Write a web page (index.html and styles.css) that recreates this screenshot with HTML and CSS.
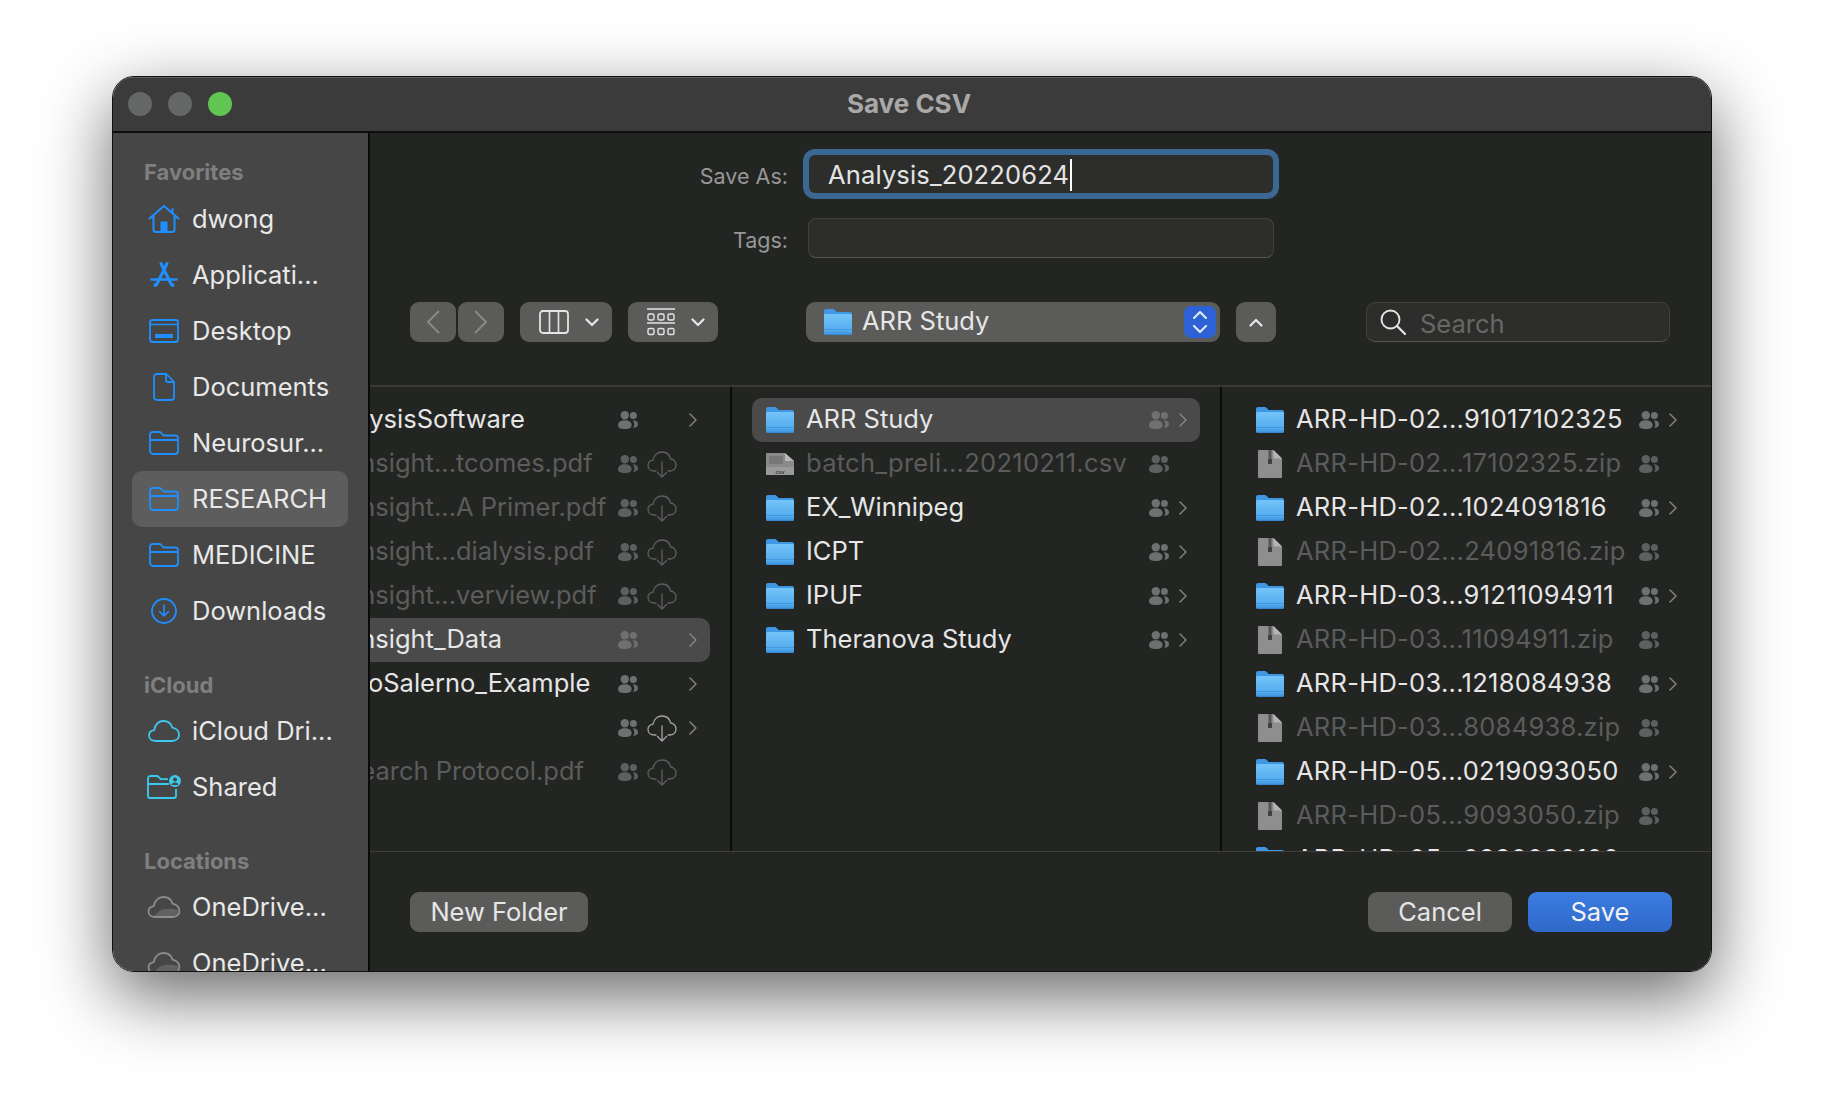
FILE: index.html
```html
<!DOCTYPE html>
<html>
<head>
  <title>Save CSV</title>
  <link rel="stylesheet" href="styles.css">
</head>
<body>
  <svg class="sprite" width="0" height="0">
    <defs>
      <linearGradient id="folder_grad" x1="0" y1="0" x2="0" y2="1">
        <stop offset="0" stop-color="#74c4f8"/>
        <stop offset="1" stop-color="#4ba6ec"/>
      </linearGradient>
      <symbol id="i_folder" viewBox="0 0 28 26">
        <path d="M0 2a2 2 0 0 1 2-2h6.500c1 0 1.600.4 2.300 1.100L12.600 3H26a2 2 0 0 1 2 2v4H0z" fill="#3f97e3"/>
        <path d="M0 6.500c0-.8.7-1.500 1.500-1.500H26.500c.8 0 1.500.7 1.500 1.500V24a2 2 0 0 1-2 2H2a2 2 0 0 1-2-2z" fill="url(#folder_grad)"/>
        <path d="M0 20.500h28M0 23h28" stroke="#3b8fd8" stroke-width="1" opacity=".7"/>
        <path d="M0 24.500h28V24a2 2 0 0 1-2 2H2a2 2 0 0 1-2-2z" fill="#358ad6"/>
      </symbol>
      <symbol id="i_zip" viewBox="0 0 24 28">
        <path d="M1 0h14.500L24 8.500V27a1 1 0 0 1-1 1H1a1 1 0 0 1-1-1V1a1 1 0 0 1 1-1z" fill="#8e8e8e"/>
        <path d="M15.500 0L24 8.500h-7a1.500 1.500 0 0 1-1.500-1.500z" fill="#b5b5b5"/>
        <rect x="10.500" y="0" width="3" height="10" fill="#555"/>
        <rect x="10" y="9" width="4" height="5" rx="1" fill="#3e3e3e"/>
      </symbol>
      <symbol id="i_csv" viewBox="0 0 28 22">
        <path d="M1 0h18l9 8v13a1 1 0 0 1-1 1H1a1 1 0 0 1-1-1V1a1 1 0 0 1 1-1z" fill="#8a8a8a"/>
        <path d="M19 0l9 8h-8a1 1 0 0 1-1-1z" fill="#b8b8b8"/>
        <path d="M3 3h14v8H3z" fill="#777"/>
        <path d="M0 14h28v7a1 1 0 0 1-1 1H1a1 1 0 0 1-1-1z" fill="#9a9a9a"/>
        <text x="14" y="20.500" font-size="5.500" font-family="'Liberation Sans', sans-serif" font-weight="700" text-anchor="middle" fill="#3a3a3a">csv</text>
      </symbol>
      <symbol id="i_users" viewBox="0 0 20 18">
        <circle cx="6.800" cy="4.200" r="4.200" fill="currentColor"/>
        <circle cx="15.400" cy="4.500" r="3.500" fill="currentColor"/>
        <path d="M0 14c0-3 2.800-4.700 6.800-4.700s6.800 1.700 6.800 4.700c0 2.800-2 4-6.800 4S0 16.800 0 14z" fill="currentColor"/>
        <path d="M14.800 9.300c3 0 5.200 1.500 5.200 4 0 2.200-1.500 3.500-5 3.600 .9-.9 1.300-1.900 1.300-3.200 0-1.700-.6-3.300-1.500-4.400z" fill="currentColor"/>
      </symbol>
      <symbol id="i_cloud_dl" viewBox="0 0 30 27">
        <path d="M9 20H7.500C3.500 20 1 17.600 1 14.500c0-2.900 2-5 5-5.400C6.900 4.200 10.500 1 15 1c4.600 0 7.700 2.900 8.700 7 3.200.4 5.300 3 5.300 6 0 3.300-2.400 6-6.500 6H21" fill="none" stroke="currentColor" stroke-width="1.300" stroke-linecap="round"/>
        <path d="M15 11v15M10.500 21.500L15 26l4.500-4.500" fill="none" stroke="currentColor" stroke-width="1.300" stroke-linecap="round" stroke-linejoin="round"/>
      </symbol>
      <symbol id="i_chev" viewBox="0 0 8 14">
        <path d="M1 1l6 6-6 6" fill="none" stroke="currentColor" stroke-width="1.400" stroke-linecap="round" stroke-linejoin="round"/>
      </symbol>
      <symbol id="i_side_folder" viewBox="0 0 30 24">
        <path d="M1 5V4a3 3 0 0 1 3-3h6c1 0 1.700.4 2.300 1l2.200 2.500H26a3 3 0 0 1 3 3V20a3 3 0 0 1-3 3H4a3 3 0 0 1-3-3zM1 9h28" fill="none" stroke="currentColor" stroke-width="1.800" stroke-linejoin="round"/>
      </symbol>
      <symbol id="i_onedrive" viewBox="0 0 33 22">
        <path d="M7 20c4-6 10-9 24-6 .6 3-2 6-6 6z" fill="#616161"/>
        <path d="M8 21C3.800 21 1 18.800 1 15.500c0-3 2.200-5 5.200-5.400C7.400 4.600 11.200 1 16 1c4.400 0 7.800 2.600 9 6.600 3.900.6 7 3.600 7 7.100 0 3.500-2.700 6.300-7 6.300z" fill="none" stroke="#8e8e8e" stroke-width="1.800"/>
      </symbol>
    </defs>
  </svg>

  <div class="window">
    <div class="titlebar">
      <div class="lights">
        <span class="light"></span>
        <span class="light"></span>
        <span class="light light_green"></span>
      </div>
      <div class="title">Save CSV</div>
    </div>

    <div class="content">
      <div class="sidebar">
        <div class="side_heading side_heading_first">Favorites</div>
        <div class="side_item">
          <svg class="side_icon" width="32" height="28" viewBox="0 0 32 28"><path d="M1.500 13.500L16 1l14.500 12.500M24.500 4v4" fill="none" stroke="#1f8fff" stroke-width="2" stroke-linecap="round" stroke-linejoin="round"/><path d="M5.500 11v13.500a2.500 2.500 0 0 0 2.500 2.500h16a2.500 2.500 0 0 0 2.500-2.500V11" fill="none" stroke="#1f8fff" stroke-width="2"/><rect x="12.500" y="16.500" width="7" height="10" fill="#1f8fff"/></svg>
          <span>dwong</span>
        </div>
        <div class="side_item">
          <svg class="side_icon" width="28" height="26" viewBox="0 0 28 26"><path d="M11 1.500l10 20.500M17 1.500L7 22" fill="none" stroke="#1f8fff" stroke-width="3" stroke-linecap="round"/><path d="M1.500 17.500h25" stroke="#1f8fff" stroke-width="2.600" stroke-linecap="round"/><circle cx="5.500" cy="23" r="2" fill="#1f8fff"/><circle cx="22.500" cy="23" r="2" fill="#1f8fff"/></svg>
          <span>Applicati...</span>
        </div>
        <div class="side_item">
          <svg class="side_icon" width="30" height="24" viewBox="0 0 30 24"><rect x="1" y="1" width="28" height="22" rx="2.500" fill="none" stroke="#1f8fff" stroke-width="1.800"/><path d="M1 5.500h28" stroke="#1f8fff" stroke-width="1.500"/><rect x="6" y="15" width="18" height="4" rx="1" fill="#1f8fff"/></svg>
          <span>Desktop</span>
        </div>
        <div class="side_item">
          <svg class="side_icon" width="22" height="28" viewBox="0 0 22 28"><path d="M4 1h9.500L21 9v15a3 3 0 0 1-3 3H4a3 3 0 0 1-3-3V4a3 3 0 0 1 3-3zM13 1v6a2 2 0 0 0 2 2h6" fill="none" stroke="#1f8fff" stroke-width="1.800" stroke-linejoin="round"/></svg>
          <span>Documents</span>
        </div>
        <div class="side_item">
          <svg class="side_icon side_blue" width="30" height="24"><use href="#i_side_folder"/></svg>
          <span>Neurosur...</span>
        </div>
        <div class="side_item side_item_active">
          <svg class="side_icon side_blue" width="30" height="24"><use href="#i_side_folder"/></svg>
          <span>RESEARCH</span>
        </div>
        <div class="side_item">
          <svg class="side_icon side_blue" width="30" height="24"><use href="#i_side_folder"/></svg>
          <span>MEDICINE</span>
        </div>
        <div class="side_item">
          <svg class="side_icon" width="26" height="26" viewBox="0 0 26 26"><circle cx="13" cy="13" r="12" fill="none" stroke="#1f8fff" stroke-width="1.800"/><path d="M13 7v11M8.500 13.500L13 18l4.500-4.500" fill="none" stroke="#1f8fff" stroke-width="1.600" stroke-linecap="round" stroke-linejoin="round"/></svg>
          <span>Downloads</span>
        </div>

        <div class="side_heading">iCloud</div>
        <div class="side_item">
          <svg class="side_icon" width="32" height="22" viewBox="0 0 32 22"><path d="M8 21C3.800 21 1 18.800 1 15.500c0-3 2.200-5 5.200-5.400C7.400 4.600 11 1 15.500 1c4.300 0 7.600 2.600 8.800 6.600C28 8.200 31 11 31 14.700c0 3.500-2.700 6.300-7 6.300z" fill="none" stroke="#3dc8ee" stroke-width="1.800"/></svg>
          <span>iCloud Dri...</span>
        </div>
        <div class="side_item">
          <svg class="side_icon" width="34" height="24" viewBox="0 0 34 24"><path d="M1 9V3.500A2.500 2.500 0 0 1 3.500 1h6c1 0 1.600.4 2.200 1l2 2.200H21M1 9h21M1 9v12a2 2 0 0 0 2 2h24a2 2 0 0 0 2-2v-7" fill="none" stroke="#3dc8ee" stroke-width="1.800" stroke-linejoin="round"/><circle cx="28" cy="6" r="6" fill="#3dc8ee"/><circle cx="28" cy="4.500" r="2" fill="#464646"/><path d="M24.500 10c.5-2 2-2.600 3.500-2.600s3 .6 3.500 2.600z" fill="#464646"/></svg>
          <span>Shared</span>
        </div>

        <div class="side_heading">Locations</div>
        <div class="side_item">
          <svg class="side_icon" width="33" height="22"><use href="#i_onedrive"/></svg>
          <span>OneDrive...</span>
        </div>
        <div class="side_item">
          <svg class="side_icon" width="33" height="22"><use href="#i_onedrive"/></svg>
          <span>OneDrive...</span>
        </div>
      </div>

      <div class="main">
        <div class="form">
          <div class="form_row">
            <label class="form_label">Save As:</label>
            <div class="field field_focus">Analysis_20220624<span class="caret"></span></div>
          </div>
          <div class="form_row form_row_tags">
            <label class="form_label">Tags:</label>
            <div class="field"></div>
          </div>
        </div>

        <div class="toolbar">
          <div class="tool tool_nav">
            <svg width="14" height="24" viewBox="0 0 14 24"><path d="M12.500 1.500L2 12l10.500 10.500" fill="none" stroke="#8a8b89" stroke-width="1.800" stroke-linecap="round" stroke-linejoin="round"/></svg>
          </div>
          <div class="tool tool_nav tool_next">
            <svg width="14" height="24" viewBox="0 0 14 24"><path d="M1.500 1.500L12 12 1.500 22.500" fill="none" stroke="#8a8b89" stroke-width="1.800" stroke-linecap="round" stroke-linejoin="round"/></svg>
          </div>
          <div class="tool tool_view">
            <svg width="30" height="24" viewBox="0 0 30 24"><rect x="1" y="1" width="28" height="22" rx="3" fill="none" stroke="#e4e4e4" stroke-width="1.800"/><path d="M10.500 1v22M19.500 1v22" stroke="#e4e4e4" stroke-width="1.600"/></svg>
            <svg class="tool_chev" width="14" height="9" viewBox="0 0 14 9"><path d="M1.500 1.500L7 7l5.500-5.500" fill="none" stroke="#e8e8e8" stroke-width="2.200" stroke-linecap="round" stroke-linejoin="round"/></svg>
          </div>
          <div class="tool tool_group">
            <svg width="28" height="28" viewBox="0 0 28 28"><path d="M0 1h28M0 15h28" stroke="#e4e4e4" stroke-width="1.400"/><g fill="none" stroke="#e4e4e4" stroke-width="1.400"><rect x="1" y="6" width="6" height="6" rx="1.500"/><rect x="11" y="6" width="6" height="6" rx="1.500"/><rect x="21" y="6" width="6" height="6" rx="1.500"/><rect x="1" y="20.500" width="6" height="6" rx="1.500"/><rect x="11" y="20.500" width="6" height="6" rx="1.500"/><rect x="21" y="20.500" width="6" height="6" rx="1.500"/></g></svg>
            <svg class="tool_chev" width="14" height="9" viewBox="0 0 14 9"><path d="M1.500 1.500L7 7l5.500-5.500" fill="none" stroke="#e8e8e8" stroke-width="2.200" stroke-linecap="round" stroke-linejoin="round"/></svg>
          </div>
          <div class="tool tool_popup">
            <svg width="28" height="26"><use href="#i_folder"/></svg>
            <span class="popup_name">ARR Study</span>
            <span class="stepper">
              <svg width="16" height="26" viewBox="0 0 16 26"><path d="M2 9l6-6 6 6M2 17l6 6 6-6" fill="none" stroke="#dfe6f7" stroke-width="2.200" stroke-linecap="round" stroke-linejoin="round"/></svg>
            </span>
          </div>
          <div class="tool tool_up">
            <svg width="14" height="9" viewBox="0 0 14 9"><path d="M1.500 7.500L7 2l5.500 5.500" fill="none" stroke="#e8e8e8" stroke-width="2.200" stroke-linecap="round" stroke-linejoin="round"/></svg>
          </div>
          <div class="search">
            <svg width="26" height="26" viewBox="0 0 26 26"><circle cx="10.500" cy="10.500" r="9" fill="none" stroke="#e4e4e4" stroke-width="1.900"/><path d="M17 17l8 8" stroke="#e4e4e4" stroke-width="2.300" stroke-linecap="round"/></svg>
            <span class="search_text">Search</span>
          </div>
        </div>

        <div class="columns">
          <div class="col col_scrolled">
            <div class="list">
              <div class="row"><svg class="icon" width="28" height="26"><use href="#i_folder"/></svg><span class="name">AnalysisSoftware</span><svg class="users" width="20" height="18"><use href="#i_users"/></svg><span class="cloud_slot"></span><svg class="chev" width="8" height="14"><use href="#i_chev"/></svg></div>
              <div class="row row_dim"><svg class="icon icon_file" width="24" height="28"><use href="#i_zip"/></svg><span class="name">HDInsight...tcomes.pdf</span><svg class="users" width="20" height="18"><use href="#i_users"/></svg><svg class="cloud" width="30" height="27"><use href="#i_cloud_dl"/></svg><span class="chev_slot"></span></div>
              <div class="row row_dim"><svg class="icon icon_file" width="24" height="28"><use href="#i_zip"/></svg><span class="name">HDInsight...A Primer.pdf</span><svg class="users" width="20" height="18"><use href="#i_users"/></svg><svg class="cloud" width="30" height="27"><use href="#i_cloud_dl"/></svg><span class="chev_slot"></span></div>
              <div class="row row_dim"><svg class="icon icon_file" width="24" height="28"><use href="#i_zip"/></svg><span class="name">HDInsight...dialysis.pdf</span><svg class="users" width="20" height="18"><use href="#i_users"/></svg><svg class="cloud" width="30" height="27"><use href="#i_cloud_dl"/></svg><span class="chev_slot"></span></div>
              <div class="row row_dim"><svg class="icon icon_file" width="24" height="28"><use href="#i_zip"/></svg><span class="name">HDInsight...verview.pdf</span><svg class="users" width="20" height="18"><use href="#i_users"/></svg><svg class="cloud" width="30" height="27"><use href="#i_cloud_dl"/></svg><span class="chev_slot"></span></div>
              <div class="row row_active"><svg class="icon" width="28" height="26"><use href="#i_folder"/></svg><span class="name">HDInsight_Data</span><svg class="users" width="20" height="18"><use href="#i_users"/></svg><span class="cloud_slot"></span><svg class="chev" width="8" height="14"><use href="#i_chev"/></svg></div>
              <div class="row"><svg class="icon" width="28" height="26"><use href="#i_folder"/></svg><span class="name">MacoSalerno_Example</span><svg class="users" width="20" height="18"><use href="#i_users"/></svg><span class="cloud_slot"></span><svg class="chev" width="8" height="14"><use href="#i_chev"/></svg></div>
              <div class="row"><svg class="icon" width="28" height="26"><use href="#i_folder"/></svg><span class="name">Old</span><svg class="users" width="20" height="18"><use href="#i_users"/></svg><svg class="cloud" width="30" height="27"><use href="#i_cloud_dl"/></svg><svg class="chev" width="8" height="14"><use href="#i_chev"/></svg></div>
              <div class="row row_dim"><svg class="icon icon_file" width="24" height="28"><use href="#i_zip"/></svg><span class="name">Research Protocol.pdf</span><svg class="users" width="20" height="18"><use href="#i_users"/></svg><svg class="cloud" width="30" height="27"><use href="#i_cloud_dl"/></svg><span class="chev_slot"></span></div>
            </div>
          </div>

          <div class="col">
            <div class="row row_active"><svg class="icon" width="28" height="26"><use href="#i_folder"/></svg><span class="name">ARR Study</span><svg class="users" width="20" height="18"><use href="#i_users"/></svg><svg class="chev" width="8" height="14"><use href="#i_chev"/></svg></div>
            <div class="row row_dim"><svg class="icon" width="28" height="22"><use href="#i_csv"/></svg><span class="name name_num">batch_preli...20210211.csv</span><svg class="users" width="20" height="18"><use href="#i_users"/></svg><span class="chev_slot"></span></div>
            <div class="row"><svg class="icon" width="28" height="26"><use href="#i_folder"/></svg><span class="name">EX_Winnipeg</span><svg class="users" width="20" height="18"><use href="#i_users"/></svg><svg class="chev" width="8" height="14"><use href="#i_chev"/></svg></div>
            <div class="row"><svg class="icon" width="28" height="26"><use href="#i_folder"/></svg><span class="name">ICPT</span><svg class="users" width="20" height="18"><use href="#i_users"/></svg><svg class="chev" width="8" height="14"><use href="#i_chev"/></svg></div>
            <div class="row"><svg class="icon" width="28" height="26"><use href="#i_folder"/></svg><span class="name">IPUF</span><svg class="users" width="20" height="18"><use href="#i_users"/></svg><svg class="chev" width="8" height="14"><use href="#i_chev"/></svg></div>
            <div class="row"><svg class="icon" width="28" height="26"><use href="#i_folder"/></svg><span class="name">Theranova Study</span><svg class="users" width="20" height="18"><use href="#i_users"/></svg><svg class="chev" width="8" height="14"><use href="#i_chev"/></svg></div>
          </div>

          <div class="col col_last">
            <div class="row"><svg class="icon" width="28" height="26"><use href="#i_folder"/></svg><span class="name name_num">ARR-HD-02...91017102325</span><svg class="users" width="20" height="18"><use href="#i_users"/></svg><svg class="chev" width="8" height="14"><use href="#i_chev"/></svg></div>
            <div class="row row_dim"><svg class="icon icon_file" width="24" height="28"><use href="#i_zip"/></svg><span class="name name_num">ARR-HD-02...17102325.zip</span><svg class="users" width="20" height="18"><use href="#i_users"/></svg><span class="chev_slot"></span></div>
            <div class="row"><svg class="icon" width="28" height="26"><use href="#i_folder"/></svg><span class="name name_num">ARR-HD-02...1024091816</span><svg class="users" width="20" height="18"><use href="#i_users"/></svg><svg class="chev" width="8" height="14"><use href="#i_chev"/></svg></div>
            <div class="row row_dim"><svg class="icon icon_file" width="24" height="28"><use href="#i_zip"/></svg><span class="name name_num">ARR-HD-02...24091816.zip</span><svg class="users" width="20" height="18"><use href="#i_users"/></svg><span class="chev_slot"></span></div>
            <div class="row"><svg class="icon" width="28" height="26"><use href="#i_folder"/></svg><span class="name name_num">ARR-HD-03...91211094911</span><svg class="users" width="20" height="18"><use href="#i_users"/></svg><svg class="chev" width="8" height="14"><use href="#i_chev"/></svg></div>
            <div class="row row_dim"><svg class="icon icon_file" width="24" height="28"><use href="#i_zip"/></svg><span class="name name_num">ARR-HD-03...11094911.zip</span><svg class="users" width="20" height="18"><use href="#i_users"/></svg><span class="chev_slot"></span></div>
            <div class="row"><svg class="icon" width="28" height="26"><use href="#i_folder"/></svg><span class="name name_num">ARR-HD-03...1218084938</span><svg class="users" width="20" height="18"><use href="#i_users"/></svg><svg class="chev" width="8" height="14"><use href="#i_chev"/></svg></div>
            <div class="row row_dim"><svg class="icon icon_file" width="24" height="28"><use href="#i_zip"/></svg><span class="name name_num">ARR-HD-03...8084938.zip</span><svg class="users" width="20" height="18"><use href="#i_users"/></svg><span class="chev_slot"></span></div>
            <div class="row"><svg class="icon" width="28" height="26"><use href="#i_folder"/></svg><span class="name name_num">ARR-HD-05...0219093050</span><svg class="users" width="20" height="18"><use href="#i_users"/></svg><svg class="chev" width="8" height="14"><use href="#i_chev"/></svg></div>
            <div class="row row_dim"><svg class="icon icon_file" width="24" height="28"><use href="#i_zip"/></svg><span class="name name_num">ARR-HD-05...9093050.zip</span><svg class="users" width="20" height="18"><use href="#i_users"/></svg><span class="chev_slot"></span></div>
            <div class="row"><svg class="icon" width="28" height="26"><use href="#i_folder"/></svg><span class="name name_num">ARR-HD-05...0220090100</span><svg class="users" width="20" height="18"><use href="#i_users"/></svg><svg class="chev" width="8" height="14"><use href="#i_chev"/></svg></div>
          </div>
        </div>

        <div class="footer">
          <button type="button" class="btn btn_folder">New Folder</button>
          <div class="footer_right">
            <button type="button" class="btn">Cancel</button>
            <button type="button" class="btn btn_save">Save</button>
          </div>
        </div>
      </div>
    </div>
  </div>
</body>
</html>
```

FILE: styles.css
```css
body {
  font-family: Inter, "Liberation Sans", sans-serif;
  font-size: 25.5px;
  margin: 0;
  padding: 76px 112px 0;
  height: 1120px;
  box-sizing: border-box;
  overflow: hidden;
  background: #fff;
  color: #e6e6e6;
}

.sprite {
  position: absolute;
}

.window {
  width: 1600px;
  height: 896px;
  box-sizing: border-box;
  border: 1px solid #111;
  border-radius: 22px;
  overflow: hidden;
  display: flex;
  flex-direction: column;
  box-shadow: 0 24px 70px rgba(0, 0, 0, 0.6);
}

.titlebar {
  flex: none;
  height: 56px;
  box-sizing: border-box;
  display: flex;
  align-items: center;
  justify-content: center;
  position: relative;
  background: #3a3b3a;
  border-top: 1px solid #5f5f5f;
  border-bottom: 2px solid #0e0e0e;
}

.lights {
  position: absolute;
  left: 15px;
  top: 14px;
  display: flex;
  gap: 16px;
}

.light {
  width: 24px;
  height: 24px;
  border-radius: 50%;
  background: #656766;
}

.light_green {
  background: #61c554;
}

.title {
  font-size: 26px;
  font-weight: 700;
  color: #a9a9a9;
  margin: -2px 6px 0 0;
}

.content {
  flex: 1;
  display: flex;
  min-height: 0;
}

/* sidebar */
.sidebar {
  flex: none;
  width: 257px;
  box-sizing: border-box;
  border-right: 2px solid #0a0a0a;
  background: #464646;
  padding: 0 20px 0 19px;
  overflow: hidden;
}

.side_heading {
  height: 64px;
  box-sizing: border-box;
  padding: 33px 0 0 12px;
  line-height: 26px;
  font-size: 22px;
  font-weight: 700;
  color: #7f7f7f;
}

.side_heading_first {
  height: 58px;
  padding-top: 26px;
}

.side_item {
  height: 56px;
  display: flex;
  align-items: center;
  padding: 0 0 2px 60px;
  box-sizing: border-box;
  border-radius: 10px;
  position: relative;
  color: #e8e8e8;
}

.side_item_active {
  background: #5d5d5d;
}

.side_icon {
  position: absolute;
  left: 32px;
  top: 50%;
  transform: translate(-50%, -50%);
}

.side_blue {
  color: #1f8fff;
}

/* main panel */
.main {
  flex: 1;
  min-width: 0;
  display: flex;
  flex-direction: column;
  background: #232522;
}

.form {
  padding-top: 22px;
}

.form_row {
  display: flex;
  align-items: center;
  height: 38px;
}

.form_row_tags {
  height: 40px;
  margin-top: 25px;
}

.form_label {
  width: 438px;
  padding: 3px 20px 0 0;
  box-sizing: border-box;
  text-align: right;
  font-size: 21.5px;
  color: #979797;
  flex: none;
}

.field {
  width: 466px;
  height: 100%;
  box-sizing: border-box;
  background: #2d2e2c;
  border: 1px solid #41423f;
  border-bottom-color: #565755;
  border-radius: 8px;
  display: flex;
  align-items: center;
  padding-left: 19px;
}

.field_focus {
  width: 464px;
  margin-left: 1px;
  border: 0;
  border-radius: 6px;
  box-shadow: 0 0 0 6px #3b6892;
  color: #e4e4e4;
  padding-top: 1px;
  letter-spacing: 0.15px;
}

.caret {
  width: 2px;
  height: 32px;
  background: #fff;
  margin-left: 1px;
}

.toolbar {
  display: flex;
  height: 40px;
  margin-top: 44px;
  padding: 0 41px 0 40px;
}

.tool {
  height: 40px;
  box-sizing: border-box;
  background: #5b5c5a;
  border-radius: 9px;
  display: flex;
  align-items: center;
}

.tool_nav {
  width: 46px;
  justify-content: center;
}

.tool_next {
  margin-left: 2px;
}

.tool_view {
  width: 92px;
  margin-left: 16px;
  padding-left: 19px;
}

.tool_group {
  width: 90px;
  margin-left: 16px;
  padding-left: 19px;
}

.tool_chev {
  margin-left: 16px;
}

.tool_popup {
  width: 414px;
  margin-left: 88px;
  padding: 0 4px 0 18px;
}

.popup_name {
  margin: -4px 0 0 10px;
  flex: 1;
}

.stepper {
  width: 32px;
  height: 32px;
  border-radius: 7px;
  background: #2d62d6;
  display: flex;
  align-items: center;
  justify-content: center;
}

.tool_up {
  width: 40px;
  margin-left: 16px;
  justify-content: center;
}

.search {
  width: 304px;
  height: 40px;
  box-sizing: border-box;
  margin-left: auto;
  padding-left: 13px;
  display: flex;
  align-items: center;
  background: #2d2e2c;
  border: 1px solid #41423f;
  border-bottom-color: #565755;
  border-radius: 9px;
}

.search_text {
  margin: 2px 0 0 14px;
  color: #666866;
}

/* file columns */
.columns {
  flex: 1;
  min-height: 0;
  display: flex;
  margin-top: 43px;
  border-top: 2px solid #393a38;
  border-bottom: 1px solid #3e3f3d;
}

.col {
  flex: none;
  width: 490px;
  box-sizing: border-box;
  padding: 11px 20px 0;
  border-right: 2px solid #0a0a0a;
  overflow: hidden;
}

.col_scrolled {
  width: 362px;
}

.col_last {
  width: 489px;
  padding-right: 21px;
  border-right: 0;
}

.list {
  margin-left: -128px;
}

.row {
  height: 44px;
  display: flex;
  align-items: center;
  padding: 0 13px 0 14px;
  border-radius: 10px;
  color: #e6e6e6;
}

.row_active {
  background: #4a4a4a;
}

.row_dim {
  color: #5b5c5b;
}

.icon {
  flex: none;
}

.icon_file {
  margin: 0 2px;
}

.name {
  flex: 1;
  min-width: 0;
  margin: -3px 0 0 12px;
  white-space: nowrap;
}

.name_num {
  letter-spacing: 0.27px;
}

.users {
  flex: none;
  color: #6f7072;
}

.row_dim .users {
  color: #5e5f60;
}

.chev {
  flex: none;
  margin-left: 10px;
  color: #868786;
}

.chev_slot {
  flex: none;
  width: 8px;
  margin-left: 10px;
}

.cloud {
  flex: none;
  margin-left: 9px;
  margin-right: 2px;
  color: #a3a3a3;
}

.row_dim .cloud {
  color: #5e5f5f;
}

.cloud_slot {
  flex: none;
  width: 41px;
}

.footer {
  flex: none;
  height: 119px;
  box-sizing: border-box;
  padding: 40px 39px 0 40px;
  display: flex;
  justify-content: space-between;
  align-items: flex-start;
}

.footer_right {
  display: flex;
  gap: 16px;
}

.btn {
  width: 144px;
  height: 40px;
  padding: 0 0 2px;
  border: 0;
  border-radius: 9px;
  background: #5b5c5a;
  color: #e6e6e6;
  font: inherit;
}

.btn_folder {
  width: 178px;
}

.btn_save {
  background: linear-gradient(#3b7de2, #2f68c8);
  color: #f2f2f2;
}
```
